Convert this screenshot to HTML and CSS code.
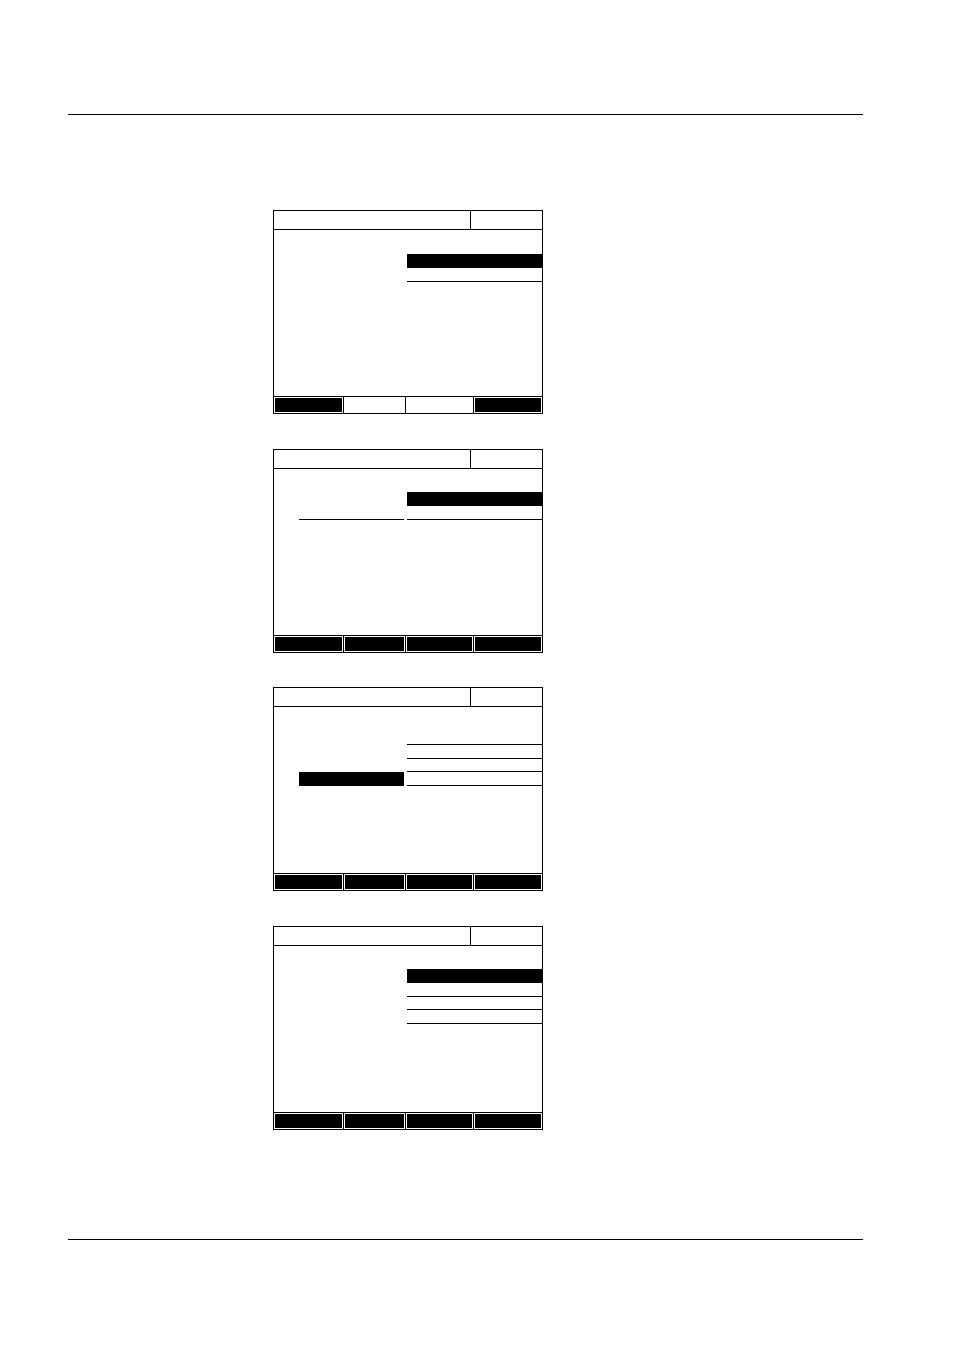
FILE: index.html
```html
<!DOCTYPE html>
<html>
<head>
<meta charset="utf-8">
<link rel="stylesheet" href="styles.css">
</head>
<body>
<div class="page">
  <div class="rule rule-top"></div>
  <div class="screens">
    <div class="screen">
      <div class="hdr"><div class="hdr-main"></div><div class="hdr-side"></div></div>
      <div class="body">
        <div class="row"><div class="l"></div><div class="r fill"></div></div>
        <div class="row"><div class="l"></div><div class="r line"></div></div>
      </div>
      <div class="ftr"><div class="k k1 on"></div><div class="k k2"></div><div class="k k3"></div><div class="k k4 on"></div></div>
    </div>
    <div class="screen up">
      <div class="hdr"><div class="hdr-main"></div><div class="hdr-side"></div></div>
      <div class="body">
        <div class="row"><div class="l"></div><div class="r fill"></div></div>
        <div class="row"><div class="l line"></div><div class="r line"></div></div>
      </div>
      <div class="ftr"><div class="k k1 on"></div><div class="k k2 on"></div><div class="k k3 on"></div><div class="k k4 on"></div></div>
    </div>
    <div class="screen">
      <div class="hdr"><div class="hdr-main"></div><div class="hdr-side"></div></div>
      <div class="body">
        <div class="row"><div class="l"></div><div class="r line"></div></div>
        <div class="row"><div class="l"></div><div class="r line"></div></div>
        <div class="row"><div class="l"></div><div class="r line"></div></div>
        <div class="row"><div class="l fill"></div><div class="r line"></div></div>
      </div>
      <div class="ftr"><div class="k k1 on"></div><div class="k k2 on"></div><div class="k k3 on"></div><div class="k k4 on"></div></div>
    </div>
    <div class="screen up">
      <div class="hdr"><div class="hdr-main"></div><div class="hdr-side"></div></div>
      <div class="body">
        <div class="row"><div class="l"></div><div class="r fill"></div></div>
        <div class="row"><div class="l"></div><div class="r line"></div></div>
        <div class="row"><div class="l"></div><div class="r line"></div></div>
        <div class="row"><div class="l"></div><div class="r line"></div></div>
      </div>
      <div class="ftr"><div class="k k1 on"></div><div class="k k2 on"></div><div class="k k3 on"></div><div class="k k4 on"></div></div>
    </div>
  </div>
  <div class="rule rule-bottom"></div>
</div>
</body>
</html>
```
FILE: styles.css
```css
html, body {
  margin: 0;
  padding: 0;
  background: #fff;
  font-family: "Liberation Sans", Arial, sans-serif;
}
.page {
  width: 954px;
  height: 1350px;
  padding-top: 114px;
  box-sizing: border-box;
}
.rule {
  height: 1px;
  background: #000;
  margin-left: 68px;
  width: 795px;
}
.screens {
  margin-top: 95px;
  padding-left: 273px;
  display: flex;
  flex-direction: column;
  gap: 34.7px;
}
.rule-bottom {
  margin-top: 109px;
}
.screen {
  width: 270px;
  height: 204px;
  box-sizing: border-box;
  border: 1px solid #000;
  display: flex;
  flex-direction: column;
}
.hdr {
  height: 19px;
  flex: none;
  box-sizing: border-box;
  border-bottom: 1px solid #000;
  display: flex;
}
.hdr-main {
  width: 197px;
  box-sizing: border-box;
  border-right: 1px solid #000;
}
.hdr-side {
  flex: 1;
}
.body {
  flex: 1;
  padding-top: 24px;
  padding-left: 25px;
  display: flex;
  flex-direction: column;
}
.up .body {
  padding-top: 23px;
}
.row {
  height: 14px;
  flex: none;
  display: flex;
  gap: 3px;
}
.row:nth-child(3) {
  height: 13px;
}
.l {
  width: 105px;
  box-sizing: border-box;
}
.r {
  width: 135px;
  box-sizing: border-box;
}
.fill {
  background: #000;
}
.line {
  border-bottom: 1px solid #000;
}
.ftr {
  height: 17px;
  flex: none;
  box-sizing: border-box;
  border-top: 1px solid #000;
  display: flex;
}
.k {
  box-sizing: border-box;
  padding: 1px;
  border-right: 1px solid #000;
  background-clip: content-box;
}
.k1 { width: 70px; }
.k2 { width: 62px; }
.k3 { width: 68px; }
.k4 { width: 68px; border-right: 0; }
.k.on {
  background-color: #000;
}
```
